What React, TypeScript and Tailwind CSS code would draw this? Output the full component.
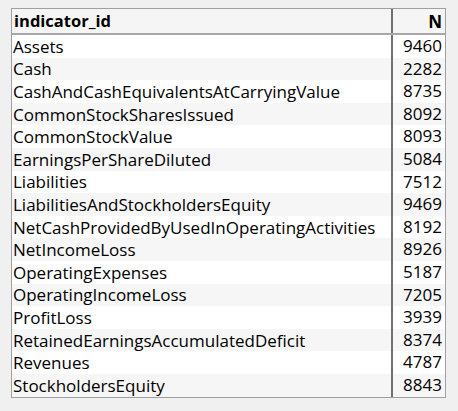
const rows: [string, number][] = [
  ["Assets", 9460],
  ["Cash", 2282],
  ["CashAndCashEquivalentsAtCarryingValue", 8735],
  ["CommonStockSharesIssued", 8092],
  ["CommonStockValue", 8093],
  ["EarningsPerShareDiluted", 5084],
  ["Liabilities", 7512],
  ["LiabilitiesAndStockholdersEquity", 9469],
  ["NetCashProvidedByUsedInOperatingActivities", 8192],
  ["NetIncomeLoss", 8926],
  ["OperatingExpenses", 5187],
  ["OperatingIncomeLoss", 7205],
  ["ProfitLoss", 3939],
  ["RetainedEarningsAccumulatedDeficit", 8374],
  ["Revenues", 4787],
  ["StockholdersEquity", 8843],
];

export default function App() {
  return (
    <div className="h-[411px] w-[458px] bg-[#f0f0f0] pl-[11px] pt-[8px] font-['Open_Sans',sans-serif] text-[17px] text-black">
      <div className="w-[435px] border border-[#a0a0a0] bg-white">
        <div className="flex h-[26px] items-center border-b-2 border-[#a8a8a8] bg-[#f5f5f5] font-bold">
          <div className="flex-1 pl-[2px] text-[16.5px] leading-none">indicator_id</div>
          <div className="w-[54px] self-stretch border-l-2 border-[#707070] pr-[3px] text-right text-[17px] leading-[26px]">N</div>
        </div>
        {rows.map(([name, n], i) => (
          <div key={name} className={`flex h-[22.6px] items-center ${i % 2 ? "bg-[#f6f6f6]" : "bg-white"}`}>
            <div className="flex-1 pl-[1px] leading-none">{name}</div>
            <div className="w-[54px] self-stretch border-l-2 border-[#707070] pr-[3px] text-right leading-[22.6px]">{n}</div>
          </div>
        ))}
      </div>
    </div>
  );
}
